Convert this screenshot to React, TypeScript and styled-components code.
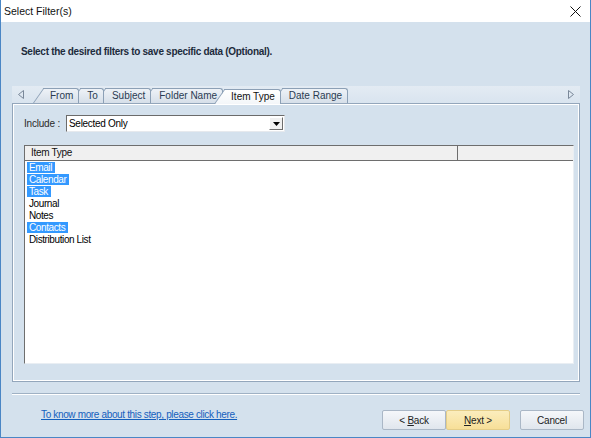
import styled, { createGlobalStyle } from 'styled-components';

const GlobalStyle = createGlobalStyle`
  html, body {
    margin: 0;
    padding: 0;
    background: #ffffff;
  }
  body {
    font-family: "Liberation Sans", Arial, sans-serif;
  }
`;

const Dialog = styled.div`
  box-sizing: border-box;
  width: 591px;
  height: 438px;
  display: flex;
  flex-direction: column;
  background: #d4e1ed;
  border: 1px solid #4a86c5;
  border-top: none;
`;

const TitleBar = styled.div`
  height: 22px;
  flex: none;
  display: flex;
  align-items: center;
  justify-content: space-between;
  background: #ffffff;
  padding: 0 9px 0 3px;
`;

const Title = styled.span`
  font-size: 10.5px;
  color: #111;
`;

const Body = styled.div`
  flex: 1;
  display: flex;
  flex-direction: column;
  padding: 0 10px 0 11px;
`;

const Heading = styled.div`
  margin-top: 23px;
  padding-left: 9px;
  font-size: 10px;
  line-height: 13px;
  font-weight: bold;
  letter-spacing: -0.3px;
  color: #1d2b3c;
`;

const TabStrip = styled.div`
  margin-top: 28px;
  height: 17px;
  display: flex;
  align-items: flex-end;
  background: linear-gradient(#e3ebf3, #d9e4ef);
`;

const ScrollArrow = styled.div`
  width: 18px;
  height: 17px;
  flex: none;
  display: flex;
  align-items: center;
  justify-content: center;
`;

const Tabs = styled.div`
  flex: 1;
  display: flex;
  align-items: flex-end;
  padding-left: 12px;
`;

const Tab = styled.div<{ $active?: boolean; $z: number }>`
  position: relative;
  z-index: ${p => p.$z};
  height: 14px;
  margin-left: 1px;
  margin-bottom: ${p => (p.$active ? '-1px' : '0')};
  padding: 0 5px 0 7px;
  font-size: 10px;
  line-height: 14px;
  color: ${p => (p.$active ? '#111' : '#2a3b52')};
  background: ${p =>
    p.$active ? 'linear-gradient(#ffffff, #f3f6f9)' : 'linear-gradient(#eef2f7, #d6dfe9)'};
  border-top: 1px solid #8ca0b6;
  border-right: 1px solid #8ca0b6;
  border-top-right-radius: 3px;
  white-space: nowrap;

  &::before {
    content: '';
    position: absolute;
    z-index: -1;
    top: -1px;
    bottom: 0;
    left: -10px;
    width: 15px;
    background: inherit;
    border-top: 1px solid #8ca0b6;
    border-left: 1px solid #8ca0b6;
    transform: skewX(-35deg);
    transform-origin: bottom left;
  }
`;

const Panel = styled.div`
  box-sizing: border-box;
  height: 279px;
  flex: none;
  display: flex;
  flex-direction: column;
  padding: 11px 5px 17px 11px;
  border: 1px solid #93a6bb;
  box-shadow: inset 1px 1px 0 #ffffff, inset -1px -1px 0 #ffffff;
`;

const IncludeRow = styled.div`
  display: flex;
  align-items: center;
  height: 17px;
`;

const Label = styled.span`
  width: 42px;
  font-size: 10px;
  letter-spacing: -0.2px;
  color: #2a2a2a;
`;

const SelectBox = styled.div`
  box-sizing: border-box;
  width: 219px;
  height: 17px;
  display: flex;
  align-items: center;
  background: #ffffff;
  border-top: 1px solid #6b6b6b;
  border-left: 1px solid #6b6b6b;
  border-right: 1px solid #e6e9ed;
  border-bottom: 1px solid #e6e9ed;
`;

const SelectValue = styled.span`
  flex: 1;
  padding-left: 2px;
  font-size: 10px;
  letter-spacing: -0.3px;
  color: #000;
`;

const DropButton = styled.div`
  box-sizing: border-box;
  width: 14px;
  height: 13px;
  margin-right: 1px;
  display: flex;
  align-items: center;
  justify-content: center;
  background: #f0f0f0;
  border: 1px solid;
  border-color: #ffffff #6d6d6d #6d6d6d #ffffff;
`;

const List = styled.div`
  margin-top: 13px;
  flex: 1;
  display: flex;
  flex-direction: column;
  background: #ffffff;
  border-top: 1px solid #6e6e6e;
  border-left: 1px solid #6e6e6e;
  border-right: 1px solid #e9eef3;
  border-bottom: 1px solid #e9eef3;
`;

const HeaderRow = styled.div`
  display: grid;
  grid-template-columns: 432px 1fr;
  height: 14px;
  background: #f0f0f0;
  border-bottom: 1px solid #6e6e6e;
`;

const HeaderCell = styled.div`
  padding-left: 6px;
  font-size: 10px;
  line-height: 14px;
  letter-spacing: -0.3px;
  color: #111;
  & + & {
    border-left: 1px solid #6e6e6e;
  }
`;

const Rows = styled.div`
  padding: 1px 0 0 2px;
  display: flex;
  flex-direction: column;
`;

const Row = styled.div`
  display: flex;
  align-items: flex-start;
  height: 12px;
  font-size: 10px;
  line-height: 11px;
`;

const Item = styled.span<{ $selected?: boolean }>`
  display: block;
  padding: 0 3px 0 2px;
  height: 11px;
  font-size: 10px;
  line-height: 11px;
  letter-spacing: -0.4px;
  color: ${p => (p.$selected ? '#ffffff' : '#000000')};
  background: ${p => (p.$selected ? '#3399ff' : 'transparent')};
`;

const Separator = styled.div`
  margin-top: 11px;
  border-top: 1px solid #9fb1c4;
  border-bottom: 1px solid #ffffff;
`;

const Footer = styled.div`
  margin-top: 15px;
  display: flex;
  align-items: flex-start;
  justify-content: space-between;
`;

const HelpLink = styled.a`
  margin-top: -2px;
  padding-left: 29px;
  font-size: 10px;
  line-height: 13px;
  letter-spacing: -0.35px;
  color: #1560bd;
  text-decoration: underline;
  cursor: pointer;
`;

const ButtonGroup = styled.div`
  display: flex;
  margin-right: -4px;
`;

const Button = styled.button<{ $primary?: boolean; $gap?: number }>`
  box-sizing: border-box;
  width: 64px;
  height: 20px;
  margin-left: ${p => p.$gap ?? 0}px;
  padding: 0;
  font-family: "Liberation Sans", Arial, sans-serif;
  font-size: 10px;
  letter-spacing: -0.2px;
  color: #222;
  border: 1px solid ${p => (p.$primary ? '#e4cd88' : '#aab7c6')};
  border-radius: 2px;
  background: ${p =>
    p.$primary ? 'linear-gradient(#fbedbd, #f7df98)' : 'linear-gradient(#f5f7fa, #e0e6ed)'};

  & u {
    text-decoration: underline;
  }
`;

const tabs = ['From', 'To', 'Subject', 'Folder Name', 'Item Type', 'Date Range'];
const activeTab = 'Item Type';

const items = [
  { name: 'Email', selected: true },
  { name: 'Calendar', selected: true },
  { name: 'Task', selected: true },
  { name: 'Journal', selected: false },
  { name: 'Notes', selected: false },
  { name: 'Contacts', selected: true },
  { name: 'Distribution List', selected: false },
];

const Arrow = ({ dir }: { dir: 'left' | 'right' }) => (
  <svg width="6" height="9" viewBox="0 0 6 9">
    <polygon
      points={dir === 'left' ? '5.5,0.5 5.5,8.5 0.5,4.5' : '0.5,0.5 0.5,8.5 5.5,4.5'}
      fill="none"
      stroke="#7a8899"
      strokeWidth="1"
    />
  </svg>
);

const App = () => (
  <>
    <GlobalStyle />
    <Dialog>
      <TitleBar>
        <Title>Select Filter(s)</Title>
        <svg width="11" height="11" viewBox="0 0 11 11">
          <path d="M0.5 0.5 L10.5 10.5 M10.5 0.5 L0.5 10.5" stroke="#111" strokeWidth="1" />
        </svg>
      </TitleBar>
      <Body>
        <Heading>Select the desired filters to save specific data (Optional).</Heading>
        <TabStrip>
          <ScrollArrow>
            <Arrow dir="left" />
          </ScrollArrow>
          <Tabs>
            {tabs.map((t, i) => (
              <Tab key={t} $active={t === activeTab} $z={t === activeTab ? 20 : 10 - i}>
                {t}
              </Tab>
            ))}
          </Tabs>
          <ScrollArrow>
            <Arrow dir="right" />
          </ScrollArrow>
        </TabStrip>
        <Panel>
          <IncludeRow>
            <Label>Include :</Label>
            <SelectBox>
              <SelectValue>Selected Only</SelectValue>
              <DropButton>
                <svg width="7" height="4" viewBox="0 0 7 4">
                  <polygon points="0,0 7,0 3.5,4" fill="#000" />
                </svg>
              </DropButton>
            </SelectBox>
          </IncludeRow>
          <List>
            <HeaderRow>
              <HeaderCell>Item Type</HeaderCell>
              <HeaderCell />
            </HeaderRow>
            <Rows>
              {items.map(it => (
                <Row key={it.name}>
                  <Item $selected={it.selected}>{it.name}</Item>
                </Row>
              ))}
            </Rows>
          </List>
        </Panel>
        <Separator />
        <Footer>
          <HelpLink>To know more about this step, please click here.</HelpLink>
          <ButtonGroup>
            <Button>
              &lt; <u>B</u>ack
            </Button>
            <Button $primary>
              <u>N</u>ext &gt;
            </Button>
            <Button $gap={10}>Cancel</Button>
          </ButtonGroup>
        </Footer>
      </Body>
    </Dialog>
  </>
);

export default App;
